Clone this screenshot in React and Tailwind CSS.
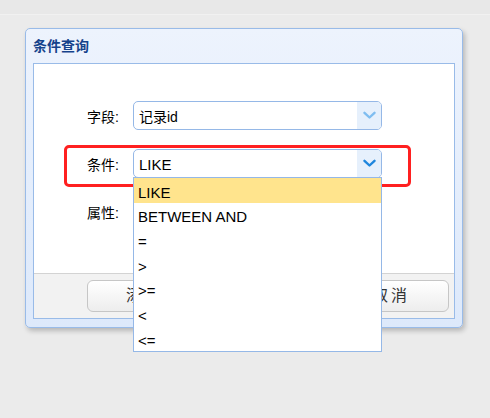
import React from 'react';

const FONT = { fontFamily: '"Liberation Sans", "Noto Sans CJK SC", sans-serif' };

const options = ['LIKE', 'BETWEEN AND', '=', '>', '>=', '<', '<='];

const Chevron = ({ color }) => (
  <svg width="13" height="9" viewBox="0 0 13 9" fill="none">
    <polyline
      points="1.5,1.8 6.5,6.5 11.5,1.8"
      stroke={color}
      strokeWidth="2.4"
      strokeLinecap="round"
      strokeLinejoin="round"
    />
  </svg>
);

const Combo = ({ value, active, children }) => (
  <div className="relative w-[249px] h-[29px]">
    <div className="flex h-full rounded-[5px] border border-[#95b8e7] bg-white overflow-hidden">
      <div className="flex-1 flex items-center pl-[5px] pt-[3px] text-[14px] text-black">{value}</div>
      <div className="w-[24px] flex items-center justify-center bg-[#e6f0fc]">
        <Chevron color={active ? '#1f86dd' : '#7fbdf0'} />
      </div>
    </div>
    {children}
  </div>
);

const Row = ({ label, children }) => (
  <div className="flex items-center">
    <div className="w-[85px] pt-[3px] text-right text-[14px] text-black">{label}</div>
    <div className="ml-[14px]">{children}</div>
  </div>
);

export default function App() {
  return (
    <div className="w-[490px] h-[418px] bg-[#ebebeb] overflow-hidden" style={FONT}>
      <div className="h-[15px] bg-[#e8e8e8] border-b border-[#f1f1f1]" />

      <div className="ml-[25px] mt-[13px] w-[438px] h-[300px] rounded-[5px] border border-[#99bbe8] bg-gradient-to-b from-[#edf3fd] to-[#dde9fb] px-[7px] pb-[8px] shadow-[2px_3px_5px_rgba(0,0,0,0.22)] flex flex-col">
        <div className="h-[34px] pt-[8px] text-[14px] font-bold text-[#15428b] leading-[18px]">条件查询</div>

        <div className="relative flex-1 border border-[#99bbe8] bg-white flex flex-col">
          <div className="flex-1 pt-[37px] flex flex-col gap-[19px]">
            <Row label="字段:">
              <Combo value="记录id" />
            </Row>
            <Row label="条件:">
              <Combo value={<span className="text-[15px]">LIKE</span>} active>
                <div className="absolute left-0 top-[28px] w-[249px] h-[175px] border border-[#95b8e7] bg-white z-20">
                  {options.map((o, i) => (
                    <div
                      key={o}
                      className={`h-[24.7px] flex items-center pl-[4px] pt-[5px] text-[15px] text-black ${i === 0 ? 'bg-[#ffe48d]' : ''}`}
                    >
                      {o}
                    </div>
                  ))}
                </div>
              </Combo>
            </Row>
            <Row label="属性:">
              <Combo value="" />
            </Row>
          </div>

          <div className="h-[45px] border-t border-[#d3d3d3] bg-[#f2f2f2] flex items-start pt-[6px] pl-[53px] gap-[130px]">
            <button className="w-[116px] h-[32px] rounded-[6px] border border-[#c6c6c6] bg-gradient-to-b from-white to-[#ededed] text-[16px] text-[#333] tracking-[3px]">
              添加
            </button>
            <button className="w-[116px] h-[32px] rounded-[6px] border border-[#c6c6c6] bg-gradient-to-b from-white to-[#ededed] text-[16px] text-[#333] tracking-[3px]">
              取消
            </button>
          </div>

          <div className="absolute left-[30px] top-[81px] w-[347px] h-[42px] rounded-[5px] border-[3px] border-[#ff2020] z-10 pointer-events-none" />
        </div>
      </div>
    </div>
  );
}
